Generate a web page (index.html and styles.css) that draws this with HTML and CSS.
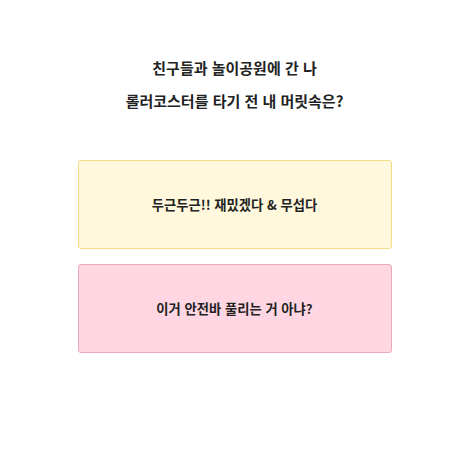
FILE: index.html
```html
<!DOCTYPE html>
<html lang="ko">
<head>
  <meta charset="UTF-8" />
  <meta name="viewport" content="width=device-width,initial-scale=1" />
  <title>롤러코스터 밸런스 게임</title>
  <link rel="stylesheet" href="styles.css">
</head>
<body>

  <div class="quiz">
    <h2 class="question">친구들과 놀이공원에 간 나<br>롤러코스터를 타기 전 내 머릿속은?</h2>

    <!-- answer choices -->
    <div class="choices">
      <button class="choice choice-yellow">두근두근!! 재밌겠다 &amp; 무섭다</button>
      <button class="choice choice-pink">이거 안전바 풀리는 거 아냐?</button>
    </div>
  </div>

</body>
</html>
```

FILE: styles.css
```css
body { margin: 0; padding-left: 9px; background: #fff; font-family: "Noto Sans CJK KR", "Noto Sans", sans-serif; color: #222; }
.quiz { width: 314px; margin: 0 auto; padding-top: 51px; }
.question { margin: 0 0 43px; font-size: 15px; font-weight: 700; line-height: 33px; text-align: center; }
.choices { display: flex; flex-direction: column; gap: 15px; }
.choice { height: 89px; border-radius: 3px; font-family: inherit; font-size: 13.3px; font-weight: 700; color: #222; cursor: pointer; }
.choice-yellow { background: #fff8dc; border: 1px solid #f2dc84; }
.choice-pink { background: #ffd6e2; border: 1px solid #eaaabd; }
```
